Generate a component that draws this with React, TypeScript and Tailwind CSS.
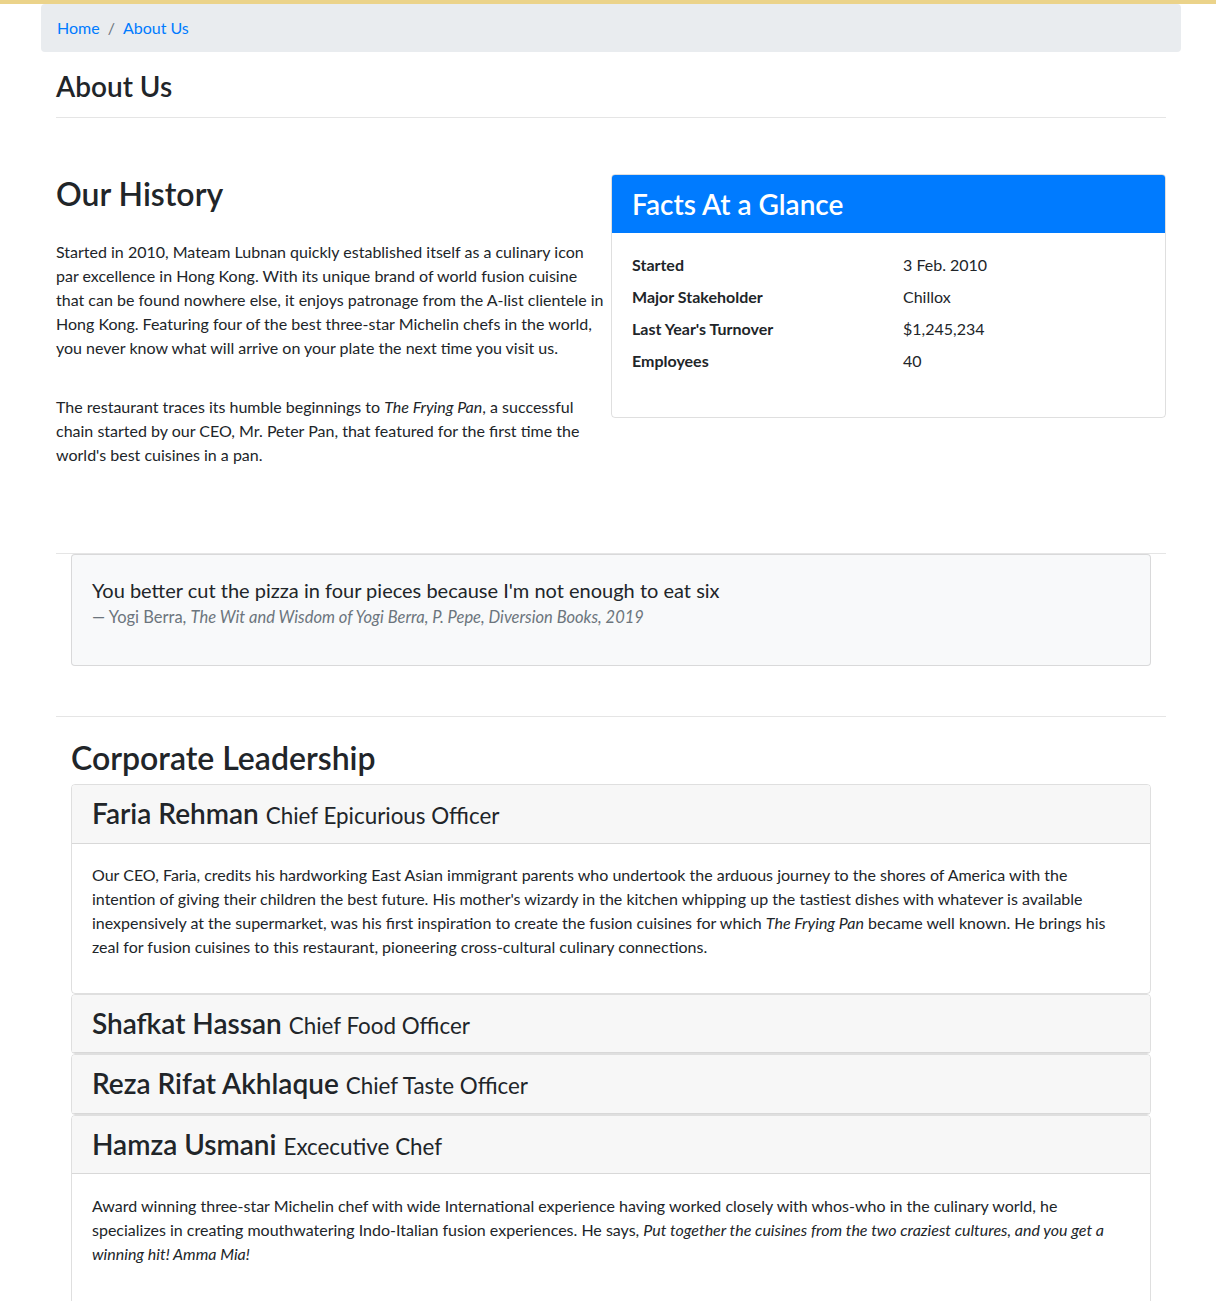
import React from "react";

const facts = [
  { label: "Started", value: "3 Feb. 2010" },
  { label: "Major Stakeholder", value: "Chillox" },
  { label: "Last Year's Turnover", value: "$1,245,234" },
  { label: "Employees", value: "40" },
];

type Leader = {
  name: string;
  title: string;
  body?: React.ReactNode;
};

const leaders: Leader[] = [
  {
    name: "Faria Rehman",
    title: "Chief Epicurious Officer",
    body: (
      <>
        Our CEO, Faria, credits his hardworking East Asian immigrant parents who undertook the arduous journey
        to the shores of America with the intention of giving their children the best future. His mother's
        wizardy in the kitchen whipping up the tastiest dishes with whatever is available inexpensively at the
        supermarket, was his first inspiration to create the fusion cuisines for which <em>The Frying Pan</em>{" "}
        became well known. He brings his zeal for fusion cuisines to this restaurant, pioneering cross-cultural
        culinary connections.
      </>
    ),
  },
  { name: "Shafkat Hassan", title: "Chief Food Officer" },
  { name: "Reza Rifat Akhlaque", title: "Chief Taste Officer" },
  {
    name: "Hamza Usmani",
    title: "Excecutive Chef",
    body: (
      <>
        Award winning three-star Michelin chef with wide International experience having worked closely with
        whos-who in the culinary world, he specializes in creating mouthwatering Indo-Italian fusion
        experiences. He says,{" "}
        <em>
          Put together the cuisines from the two craziest cultures, and you get a winning hit! Amma Mia!
        </em>
      </>
    ),
  },
];

export default function App() {
  return (
    <div className="min-h-screen bg-white text-[#212529] font-['Lato',sans-serif] text-base leading-6">
      <div className="h-[4px] bg-[#ebd38a]" />

      <div className="ml-[41px] w-[1140px]">
        {/* Breadcrumb */}
        <nav className="bg-[#e9ecef] rounded px-4 py-3 flex items-center gap-2 text-[#007bff]">
          <a href="#">Home</a>
          <span className="text-[#6c757d]">/</span>
          <a href="#">About Us</a>
        </nav>

        <div className="px-[15px]">
          <h3 className="mt-[17px] text-[28px] leading-[34px] font-semibold">About Us</h3>
          <hr className="mt-[14px] border-t border-black/10" />

          {/* History + facts */}
          <div className="mt-[56px] flex">
            <div className="w-[552px] mr-[3px]">
              <h2 className="mt-[1px] text-[32px] leading-[38px] font-semibold">Our History</h2>
              <p className="mt-[27px]">
                Started in 2010, Mateam Lubnan quickly established itself as a culinary icon par excellence in
                Hong Kong. With its unique brand of world fusion cuisine that can be found nowhere else, it
                enjoys patronage from the A-list clientele in Hong Kong. Featuring four of the best three-star
                Michelin chefs in the world, you never know what will arrive on your plate the next time you
                visit us.
              </p>
              <p className="mt-[35px]">
                The restaurant traces its humble beginnings to <em>The Frying Pan</em>, a successful chain
                started by our CEO, Mr. Peter Pan, that featured for the first time the world's best cuisines in
                a pan.
              </p>
            </div>

            <div className="w-[555px] self-start border border-black/[0.125] rounded overflow-hidden">
              <div className="bg-[#007bff] px-5 py-3">
                <h3 className="text-white text-[28px] leading-[34px] font-semibold">Facts At a Glance</h3>
              </div>
              <div className="p-5">
                <dl className="grid grid-cols-[271px_1fr] mb-4">
                  {facts.map((f) => (
                    <React.Fragment key={f.label}>
                      <dt className="font-bold mb-2">{f.label}</dt>
                      <dd className="mb-2">{f.value}</dd>
                    </React.Fragment>
                  ))}
                </dl>
              </div>
            </div>
          </div>

          <hr className="mt-[86px] border-t border-black/10" />

          {/* Quote */}
          <div className="px-[15px]">
            <div className="bg-[#f8f9fa] border border-black/[0.125] rounded p-5">
              <blockquote className="mb-4">
                <p className="text-[20px] leading-[30px]">
                  You better cut the pizza in four pieces because I'm not enough to eat six
                </p>
                <footer className="text-[#6c757d] text-[16.5px] leading-6">
                  — Yogi Berra,{" "}
                  <cite className="italic">
                    The Wit and Wisdom of Yogi Berra, P. Pepe, Diversion Books, 2019
                  </cite>
                </footer>
              </blockquote>
            </div>
          </div>

          <hr className="mt-[50px] border-t border-black/10" />

          {/* Leadership */}
          <div className="px-[15px]">
            <h2 className="mt-[22px] mb-[7px] text-[32px] leading-[38px] font-semibold">Corporate Leadership</h2>
            <div className="flex flex-col">
              {leaders.map((l, i) => (
                <div key={l.name} className="border border-black/[0.125] rounded-[4px] overflow-hidden">
                  <div className="bg-[#f7f7f7] px-5 py-3 border-b border-black/[0.125]">
                    <h3 className="text-[28px] leading-[1.2] font-semibold">
                      {l.name} <small className="text-[80%] font-normal">{l.title}</small>
                    </h3>
                  </div>
                  {l.body && (
                    <div className={i === 0 ? "px-5 pt-[19px] pb-[18px]" : "px-5 pt-5 pb-6"}>
                      <p className="mb-4">{l.body}</p>
                    </div>
                  )}
                </div>
              ))}
            </div>
          </div>
        </div>
      </div>
    </div>
  );
}
